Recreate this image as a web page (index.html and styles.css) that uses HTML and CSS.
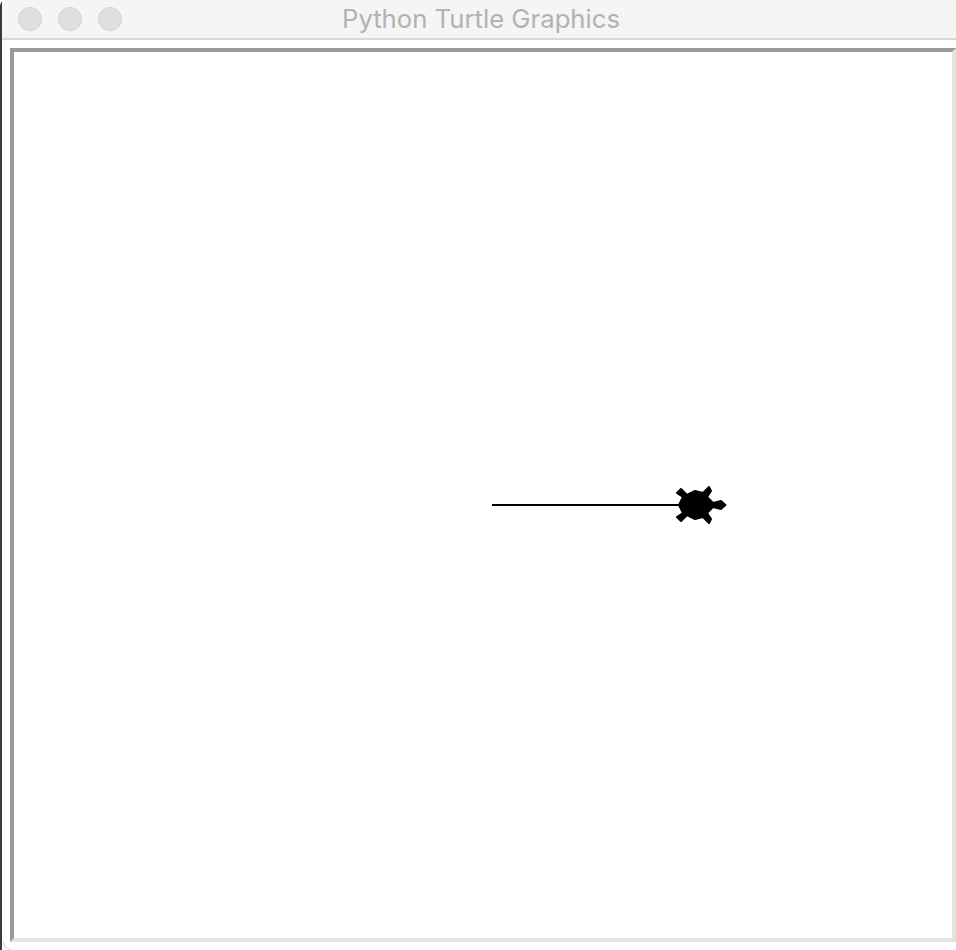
FILE: index.html
```html
<!DOCTYPE html>
<html lang="en">
<head>
<meta charset="utf-8">
<title>Python Turtle Graphics</title>
<link rel="stylesheet" href="styles.css">
</head>
<body>
<div class="window">
  <header class="titlebar">
    <div class="lights">
      <span class="light"></span>
      <span class="light"></span>
      <span class="light"></span>
    </div>
    <h1 class="title">Python Turtle Graphics</h1>
    <div class="spacer"></div>
  </header>
  <main class="content">
    <div class="canvas">
      <svg class="drawing" viewBox="0 0 942 886" width="942" height="886" xmlns="http://www.w3.org/2000/svg">
        <line x1="478" y1="453" x2="680" y2="453" stroke="#000" stroke-width="2"/>
        <polygon transform="translate(679 453) rotate(-90) scale(2)" fill="#000" stroke="#000" stroke-width="1" stroke-linejoin="round" points="0,16.2 -2,14 -1,10 -4,7 -7,9 -9,8 -6,5 -7,1 -5,-3 -8,-6 -6,-8 -4,-5 0,-7 4,-5 6,-8 8,-6 5,-3 7,1 6,5 9,8 7,9 4,7 1,10 2,14"/>
      </svg>
    </div>
  </main>
</div>
</body>
</html>
```

FILE: styles.css
```css
html, body {
  margin: 0;
  padding: 0;
  height: 100%;
  background: #ffffff;
}

body {
  overflow: hidden;
}

.window {
  position: relative;
  box-sizing: border-box;
  width: 956px;
  height: 950px;
  display: flex;
  flex-direction: column;
  border-left: 2px solid #3a3a3c;
  border-top-left-radius: 6px;
  background: #ffffff;
}

.window::after {
  content: "";
  position: absolute;
  left: 1px;
  bottom: 0;
  width: 8px;
  height: 8px;
  box-sizing: border-box;
  border-left: 1px solid #cccccc;
  border-bottom: 1px solid #dddddd;
  border-bottom-left-radius: 8px;
}

.titlebar {
  box-sizing: border-box;
  height: 40px;
  flex: none;
  display: grid;
  grid-template-columns: 1fr auto 1fr;
  align-items: center;
  background: #f5f5f5;
  border-bottom: 2px solid #d9d9d9;
}

.lights {
  display: flex;
  gap: 16px;
  padding-left: 16px;
}

.light {
  box-sizing: border-box;
  width: 24px;
  height: 24px;
  border-radius: 50%;
  background: #dfdfdf;
  border: 1px solid #d2d2d2;
}

.title {
  margin: 0 0 0 4px;
  font-family: Inter, "Liberation Sans", Arial, sans-serif;
  font-size: 25.7px;
  font-weight: 400;
  line-height: 38px;
  color: #b2b2b2;
  white-space: nowrap;
}

.content {
  flex: 1;
  min-height: 0;
  padding: 8px 0 8px 8px;
}

.canvas {
  box-sizing: border-box;
  width: 946px;
  height: 894px;
  border-style: solid;
  border-width: 4px;
  border-color: #999999 #e3e3e3 #e3e3e3 #999999;
  background: #ffffff;
}

.drawing {
  display: block;
}
```
